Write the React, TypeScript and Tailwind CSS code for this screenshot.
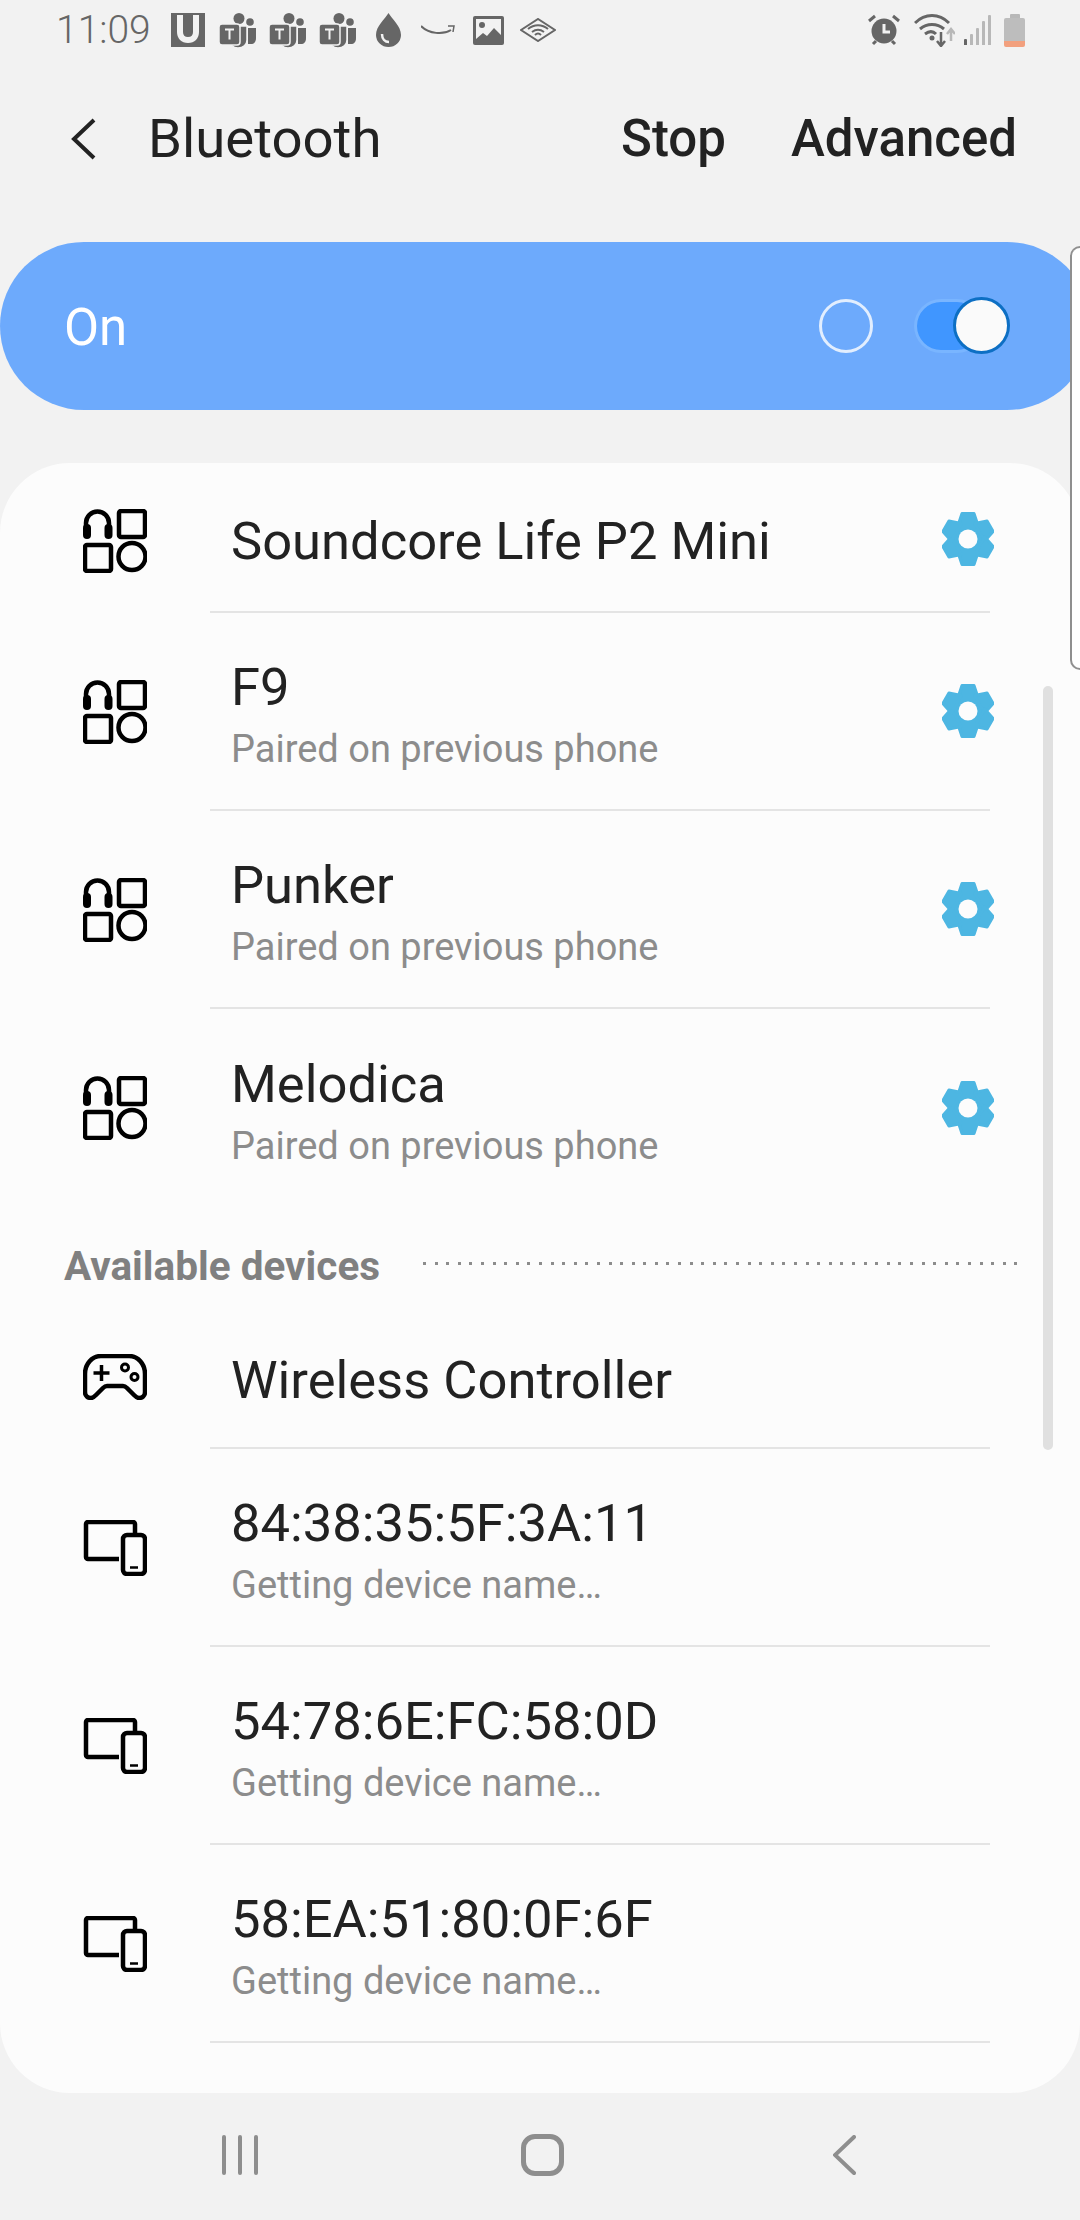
const FONT = "font-['Roboto',sans-serif]";

function TeamsIcon({ className = "" }: { className?: string }) {
  return (
    <svg width="37" height="35" viewBox="0 0 37 35" className={className}>
      <circle cx="20" cy="5.5" r="5.5" fill="#666" />
      <circle cx="31" cy="9" r="3.8" fill="#666" />
      <path d="M29 15h8v10c0 4-2 6-5 6h-3z" fill="#666" />
      <path d="M10 13h18v14c0 5-4 8-9 8s-9-4-9-8z" fill="#666" stroke="#f2f2f2" strokeWidth="1.5" />
      <rect x="0" y="11" width="21" height="21" rx="3" fill="#666" stroke="#f2f2f2" strokeWidth="1.5" />
      <path d="M6 16.5h9M10.5 16.5v10" stroke="#f2f2f2" strokeWidth="2" fill="none" />
    </svg>
  );
}

function StatusLeft() {
  return (
    <div className="flex items-center pl-[56px]">
      <span className="w-[93px] text-[39px] leading-none font-light text-[#666]">11:09</span>
      <svg width="34" height="34" viewBox="0 0 34 34" className="ml-[22px]">
        <rect width="34" height="34" fill="#666" />
        <path d="M9 2v17c0 5 3 8 8 8s8-3 8-8V2" fill="none" stroke="#f2f2f2" strokeWidth="6" />
      </svg>
      <TeamsIcon className="ml-[14px]" />
      <TeamsIcon className="ml-[13px]" />
      <TeamsIcon className="ml-[13px]" />
      <svg width="25" height="34" viewBox="0 0 25 34" className="ml-[20px]">
        <path d="M12.5 0C9 6 0 13 0 22a12.500 12 0 0 0 25 0C25 13 16 6 12.500 0z" fill="#666" />
        <path d="M6 21c0 5 3 8 7 8" fill="none" stroke="#f2f2f2" strokeWidth="2.5" />
      </svg>
      <svg width="34" height="12" viewBox="0 0 34 12" className="ml-[20px]">
        <path d="M0 2c8 8 22 9 30 4" fill="none" stroke="#666" strokeWidth="2" />
        <path d="M27 2l6 0-1 6" fill="none" stroke="#666" strokeWidth="1.5" />
      </svg>
      <svg width="31" height="29" viewBox="0 0 31 29" className="ml-[18px]">
        <rect width="31" height="29" rx="2" fill="#666" />
        <rect x="3" y="3" width="25" height="20" fill="#f2f2f2" />
        <circle cx="9" cy="9" r="3" fill="#666" />
        <path d="M3 23l7-6 4 3 7-8 7 7v4z" fill="#666" />
      </svg>
      <svg width="36" height="24" viewBox="0 0 36 24" className="ml-[16px]">
        <path d="M1 12L18 1l17 11-17 11z" fill="none" stroke="#666" strokeWidth="2" />
        <path d="M8 11c6-5 14-5 20 0M12 14c4-3 8-3 12 0M15 17c2-2 4-2 6 0" fill="none" stroke="#666" strokeWidth="2" />
      </svg>
    </div>
  );
}

function StatusRight() {
  return (
    <div className="flex items-center pr-[55px]">
      <svg width="32" height="32" viewBox="0 0 32 32">
        <circle cx="16" cy="17" r="12.500" fill="#666" />
        <path d="M16 10v8h6" fill="none" stroke="#f2f2f2" strokeWidth="3" />
        <path d="M1 7l6-5M31 7l-6-5M5 30l3-3M27 30l-3-3" stroke="#666" strokeWidth="3" fill="none" />
      </svg>
      <svg width="41" height="33" viewBox="0 0 41 33" className="ml-[14px]">
        <path d="M1 9c10-10 24-10 34 0M6 15c7-6 17-6 24 0M11 20c4-3 8-3 11 0" fill="none" stroke="#666" strokeWidth="3" />
        <circle cx="18" cy="24" r="2.500" fill="#666" />
        <path d="M27 18v13M23 27l4 5 4-5" fill="none" stroke="#666" strokeWidth="2.500" />
        <path d="M37 27V16M33 20l4-5 4 5" fill="none" stroke="#b8b8b8" strokeWidth="2.500" />
      </svg>
      <div className="ml-[9px] flex h-[30px] items-end gap-[3px]">
        <span className="h-[6px] w-[3px] rounded-t-[1px] bg-[#666]" />
        <span className="h-[11px] w-[3px] rounded-t-[1px] bg-[#b8b8b8]" />
        <span className="h-[17px] w-[3px] rounded-t-[1px] bg-[#b8b8b8]" />
        <span className="h-[24px] w-[3px] rounded-t-[1px] bg-[#b8b8b8]" />
        <span className="h-[30px] w-[3px] rounded-t-[1px] bg-[#b8b8b8]" />
      </div>
      <div className="ml-[13px] flex w-[21px] flex-col items-center">
        <span className="h-[4px] w-[10px] rounded-t-[1px] bg-[#b8b8b8]" />
        <span className="h-[23px] w-full rounded-t-[2px] bg-[#bdbdbd]" />
        <span className="h-[6px] w-full rounded-b-[2px] bg-[#f2a07e]" />
      </div>
    </div>
  );
}

function BudsIcon() {
  return (
    <svg width="64" height="64" viewBox="0 0 64 64" fill="none" stroke="#000" strokeWidth="4.500">
      <path d="M3 18v-4a11.500 11.500 0 0 1 23 0v4" />
      <rect x="0" y="15" width="8" height="15" rx="4" fill="#000" stroke="none" />
      <rect x="21.500" y="15" width="8" height="15" rx="4" fill="#000" stroke="none" />
      <rect x="36" y="2" width="26" height="26" rx="2" />
      <rect x="2" y="36" width="26" height="26" rx="2" />
      <circle cx="49" cy="47.500" r="13.500" />
    </svg>
  );
}

function PadIcon() {
  return (
    <svg width="64" height="46" viewBox="0 0 64 46" fill="none" stroke="#000" strokeWidth="4.500" strokeLinejoin="round">
      <path d="M18 2h28c9 0 16 8 16 18v18c0 4-3 6-6 6-2 0-3-1-5-3l-7-7c-1-1-2-2-4-2H24c-2 0-3 1-4 2l-7 7c-2 2-3 3-5 3-3 0-6-2-6-6V20C2 10 9 2 18 2z" />
      <path d="M10.500 19h16M18.500 11v16" strokeWidth="3.500" />
      <circle cx="42" cy="13.500" r="3.500" strokeWidth="3" />
      <circle cx="51.500" cy="23" r="3.500" strokeWidth="3" />
    </svg>
  );
}

function DeviceIcon() {
  return (
    <svg width="64" height="56" viewBox="0 0 64 56" fill="none" stroke="#000" strokeWidth="4.500">
      <path d="M36 39H5a2 2 0 0 1-2-2V4a2 2 0 0 1 2-2h45a2 2 0 0 1 2 2v9" />
      <rect x="40" y="15" width="22" height="39" rx="4" />
      <path d="M47 47.500h8" strokeWidth="2.500" />
    </svg>
  );
}

function Gear({ className = "" }: { className?: string }) {
  return (
    <svg width="52" height="54" viewBox="0 0 52 54" className={`-mr-[4px] ml-auto ${className}`}>
      <g fill="#4db6e2" stroke="#4db6e2" strokeWidth="3" strokeLinejoin="round">
        <circle cx="26" cy="27" r="18.500" />
        {[0, 60, 120, 180, 240, 300].map((deg) => (
          <path key={deg} d="M20 1.500h12l4 12H16z" transform={`rotate(${deg} 26 27)`} />
        ))}
      </g>
      <circle cx="26" cy="27" r="9.500" fill="#fcfcfc" />
    </svg>
  );
}

type RowProps = {
  icon: React.ReactNode;
  title: string;
  sub?: string;
  gear?: boolean;
  divider?: boolean;
  first?: boolean;
  h: string;
};

function Row({ icon, title, sub, gear, divider = true, first, h }: RowProps) {
  return (
    <div className={`flex ${h}`}>
      <div className={`flex w-[210px] items-center pl-[83px] ${first ? "pt-[6px]" : ""}`}>{icon}</div>
      <div
        className={`mr-[90px] flex flex-1 items-center pl-[21px] ${
          divider ? "border-b-2 border-[#e4e4e4]" : ""
        }`}
      >
        <div className="flex flex-col pt-[8px]">
          <span className="text-[52.5px] leading-[60px] text-[#222]">{title}</span>
          {sub && <span className="mt-[8px] text-[38px] leading-[48px] text-[#8c8c8c]">{sub}</span>}
        </div>
        {gear && <Gear className={first ? "mt-[4px]" : ""} />}
      </div>
    </div>
  );
}

export default function App() {
  const dots = Array.from({ length: 52 });

  return (
    <div className={`relative flex h-[2220px] w-[1080px] flex-col overflow-hidden bg-[#f2f2f2] ${FONT}`}>
      <div className="flex h-[60px] items-center justify-between">
        <StatusLeft />
        <StatusRight />
      </div>

      <div className="flex h-[156px] items-center pt-[2px] pl-[71px] pr-[63px]">
        <svg width="25" height="42" viewBox="0 0 25 42" fill="none" stroke="#222" strokeWidth="4">
          <path d="M23 2L3 21l20 19" />
        </svg>
        <span className="ml-[52px] text-[54.5px] text-[#222]">Bluetooth</span>
        <span className="ml-auto text-[51px] font-medium text-[#222]">Stop</span>
        <span className="ml-[65px] text-[51px] font-medium text-[#222]">Advanced</span>
      </div>

      <div className="mt-[26px] flex h-[168px] w-[1091px] items-center rounded-[84px] bg-[#6daafc] pl-[64px] pr-[81px]">
        <span className="pt-[4px] text-[51px] text-white">On</span>
        <span className="ml-auto size-[54px] rounded-full border-[3px] border-white/80" />
        <div className="relative ml-[41px] h-[54px] w-[96px]">
          <div className="h-full w-[70px] rounded-full border-[3px] border-white/30 bg-[#4096ff]" />
          <span className="absolute top-[-2px] right-0 size-[57px] rounded-full border-[3px] border-[#0d6fc4] bg-[#fafafa]" />
        </div>
      </div>

      <div className="mt-[53px] flex h-[1630px] flex-col rounded-[70px] bg-[#fcfcfc]">
        <Row h="h-[150px]" icon={<BudsIcon />} title="Soundcore Life P2 Mini" gear first />
        <Row h="h-[198px]" icon={<BudsIcon />} title="F9" sub="Paired on previous phone" gear />
        <Row h="h-[198px]" icon={<BudsIcon />} title="Punker" sub="Paired on previous phone" gear />
        <Row h="h-[198px]" icon={<BudsIcon />} title="Melodica" sub="Paired on previous phone" gear divider={false} />

        <div className="flex h-[98px] items-center pt-[14px] pl-[64px] pr-[62px]">
          <span className="pt-[6px] text-[40.5px] font-bold text-[#808080]">Available devices</span>
          <div className="ml-auto flex w-[595px] justify-between">
            {dots.map((_, i) => (
              <span key={i} className="size-[3px] bg-[#8c8c8c]" />
            ))}
          </div>
        </div>

        <Row h="h-[144px]" icon={<PadIcon />} title="Wireless Controller" />
        <Row h="h-[198px]" icon={<DeviceIcon />} title="84:38:35:5F:3A:11" sub="Getting device name…" />
        <Row h="h-[198px]" icon={<DeviceIcon />} title="54:78:6E:FC:58:0D" sub="Getting device name…" />
        <Row h="h-[198px]" icon={<DeviceIcon />} title="58:EA:51:80:0F:6F" sub="Getting device name…" />
      </div>

      <div className="flex flex-1 items-center justify-between pb-[3px] pl-[222px] pr-[224px]">
        <div className="flex h-[40px] gap-[12px]">
          <span className="w-[4px] rounded-full bg-[#8e8e8e]" />
          <span className="w-[4px] rounded-full bg-[#8e8e8e]" />
          <span className="w-[4px] rounded-full bg-[#8e8e8e]" />
        </div>
        <span className="mr-[6px] h-[42px] w-[43px] rounded-[14px] border-[5px] border-[#8e8e8e]" />
        <svg width="23" height="40" viewBox="0 0 23 40" fill="none" stroke="#8e8e8e" strokeWidth="4" strokeLinecap="round">
          <path d="M21 2L2 20l19 18" />
        </svg>
      </div>

      <div className="absolute top-[246px] right-0 h-[424px] w-[10px] rounded-l-[12px] border-y-2 border-l-2 border-[#8f8f8f] bg-white" />
      <div className="absolute top-[686px] left-[1043px] h-[764px] w-[10px] rounded-full bg-[#e0e0e0]" />
    </div>
  );
}
